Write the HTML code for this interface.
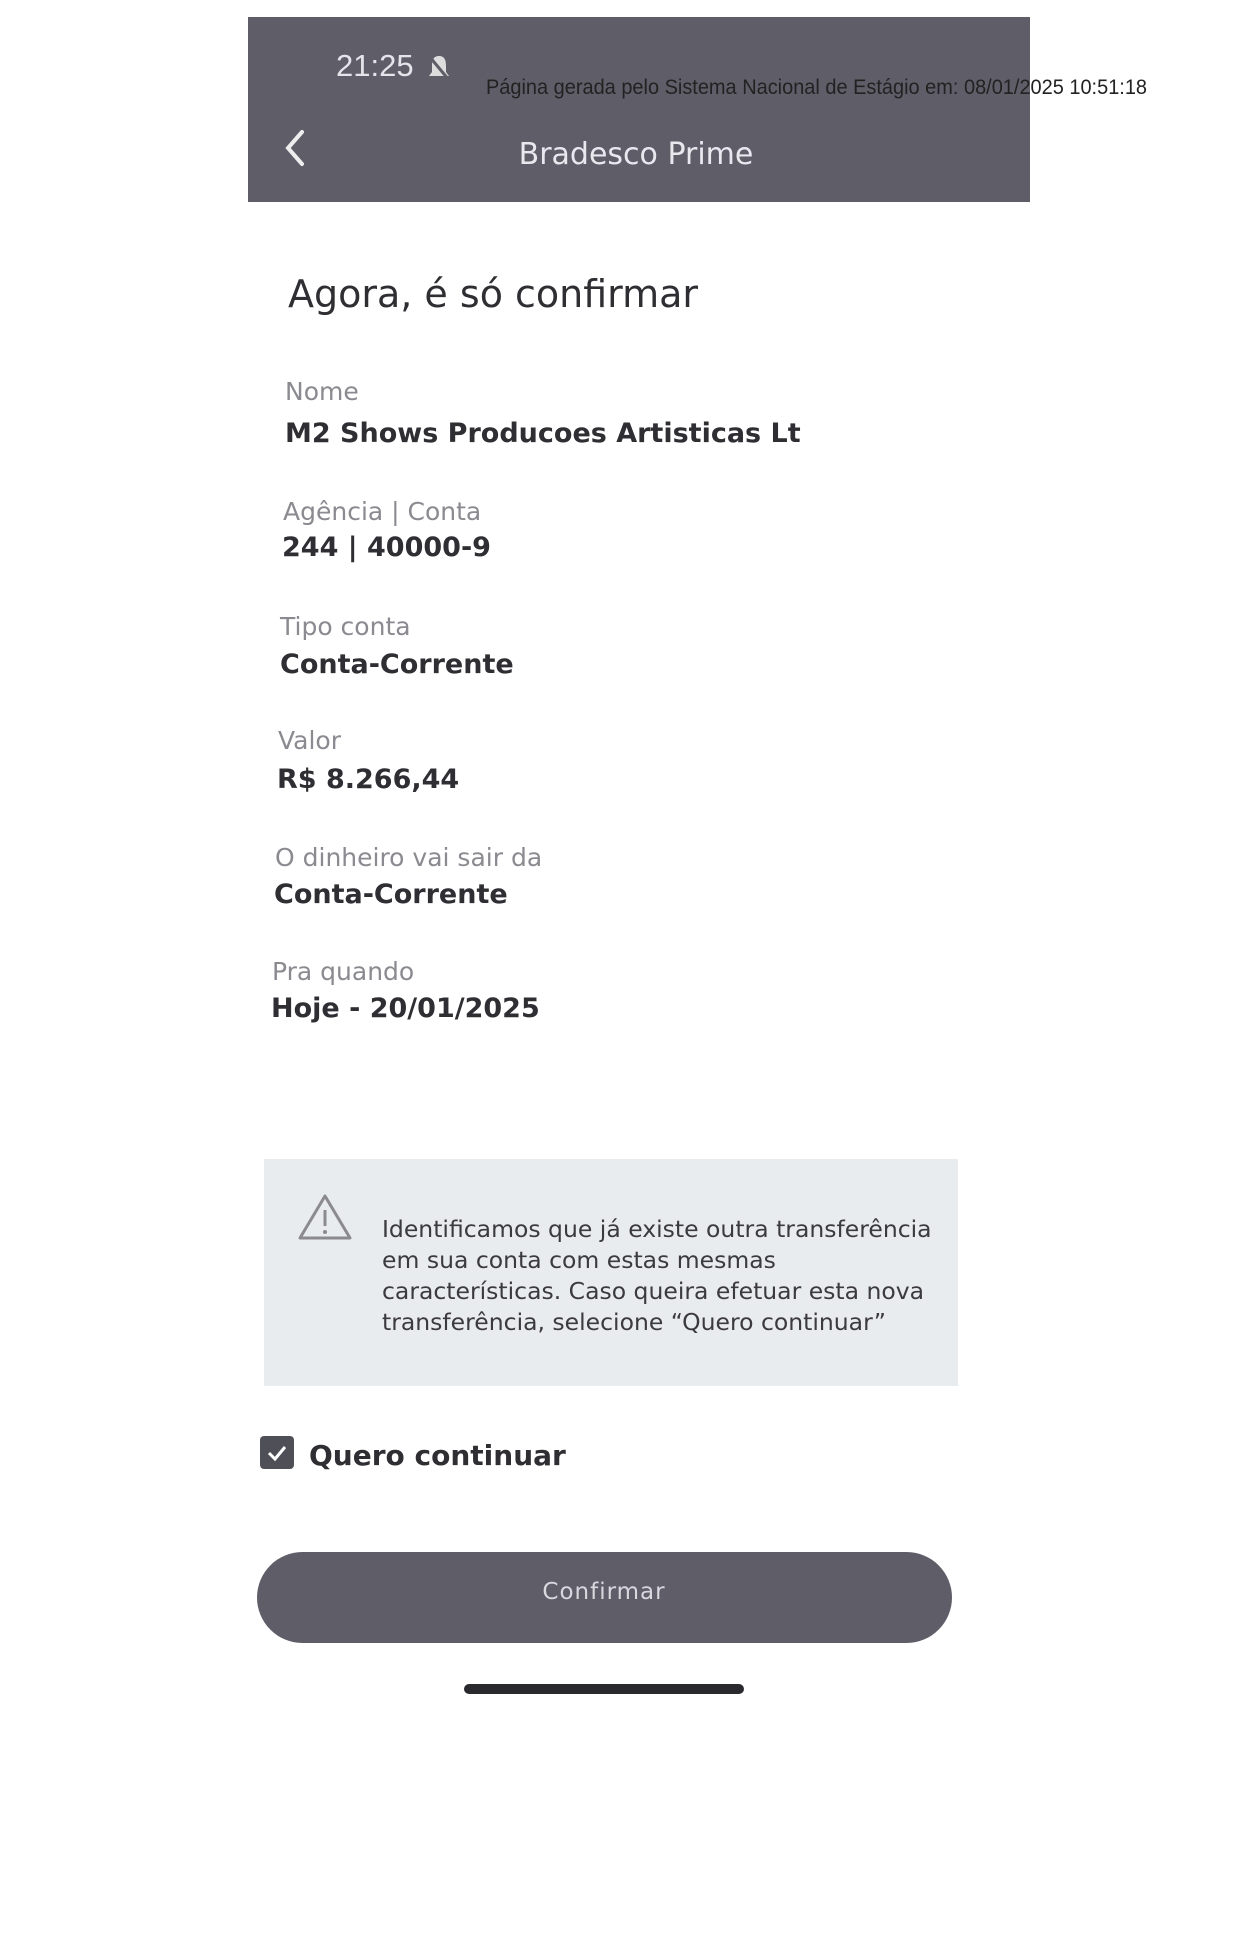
<!DOCTYPE html>
<html><head><meta charset="utf-8"><style>
body{margin:0;width:1240px;height:1948px;background:#fff;position:relative;overflow:hidden;font-family:"DejaVu Sans","Liberation Sans",sans-serif;}
.a{position:absolute;white-space:nowrap;}
.hdr{position:absolute;left:248px;top:17px;width:782px;height:185px;background:#5f5d68;}
.lbl{position:absolute;font-size:25px;color:#8a8a90;white-space:nowrap;}
.val{position:absolute;font-size:27px;font-weight:bold;color:#2e2e33;white-space:nowrap;}
</style></head><body>
<div class="hdr"></div>
<div class="a" style="left:336px;top:48px;font-size:31px;color:#e4e4ea;font-family:'Liberation Sans',sans-serif;">21:25</div>
<svg class="a" style="left:426px;top:52px" width="26" height="30"><path d="M13 4 C7 4 6 9 6 14 L6 20 L3 24 L23 24 L20 20 L20 14 C20 9 19 4 13 4 Z" fill="#ddd"/><path d="M3 4 L23 28" stroke="#5f5d68" stroke-width="3"/></svg>
<div class="a" style="left:486px;top:76px;font-size:21px;color:#222;font-family:'Liberation Sans',sans-serif;transform:scaleX(0.95);transform-origin:left;">Página gerada pelo Sistema Nacional de Estágio em: 08/01/2025 10:51:18</div>
<svg class="a" style="left:280px;top:128px" width="30" height="40"><path d="M22 4 L8 20 L22 36" stroke="#eee" stroke-width="4" fill="none" stroke-linecap="round"/></svg>
<div class="a" style="left:636px;top:137px;transform:translateX(-50%);font-size:30px;color:#e8e8ee;">Bradesco Prime</div>
<div class="a" style="left:288px;top:272px;font-size:38px;color:#2e2e33;">Agora, é só confirmar</div>
<div class="lbl" style="left:285px;top:377px">Nome</div><div class="val" style="left:285px;top:418px">M2 Shows Producoes Artisticas Lt</div>
<div class="lbl" style="left:283px;top:497px">Agência | Conta</div><div class="val" style="left:282px;top:532px">244 | 40000-9</div>
<div class="lbl" style="left:280px;top:612px">Tipo conta</div><div class="val" style="left:280px;top:649px">Conta-Corrente</div>
<div class="lbl" style="left:278px;top:726px">Valor</div><div class="val" style="left:277px;top:764px">R$ 8.266,44</div>
<div class="lbl" style="left:275px;top:843px">O dinheiro vai sair da</div><div class="val" style="left:274px;top:879px">Conta-Corrente</div>
<div class="lbl" style="left:272px;top:957px">Pra quando</div><div class="val" style="left:271px;top:993px">Hoje - 20/01/2025</div>
<div class="a" style="left:264px;top:1159px;width:694px;height:227px;background:#e9ecee;"></div>
<svg class="a" style="left:296px;top:1192px" width="58" height="50"><path d="M29 4 L54 46 L4 46 Z" stroke="#8a8a90" stroke-width="3" fill="none" stroke-linejoin="round"/><path d="M29 18 V34" stroke="#8a8a90" stroke-width="3"/><circle cx="29" cy="40" r="2" fill="#8a8a90"/></svg>
<div class="a" style="left:382px;top:1214px;font-size:23.5px;line-height:31px;color:#3a3a40;">Identificamos que já existe outra transferência<br>em sua conta com estas mesmas<br>características. Caso queira efetuar esta nova<br>transferência, selecione “Quero continuar”</div>
<div class="a" style="left:260px;top:1436px;width:34px;height:33px;background:#4f4f57;border-radius:4px;"></div>
<svg class="a" style="left:260px;top:1436px" width="34" height="33"><path d="M9 17 L15 23 L25 11" stroke="#fff" stroke-width="3" fill="none"/></svg>
<div class="a" style="left:309px;top:1439px;font-size:28px;font-weight:bold;color:#2e2e33;">Quero continuar</div>
<div class="a" style="left:257px;top:1552px;width:695px;height:91px;background:#5f5d68;border-radius:46px;"></div>
<div class="a" style="left:604px;top:1579px;transform:translateX(-50%);font-size:23px;color:#d8d8de;letter-spacing:1px;">Confirmar</div>
<div class="a" style="left:464px;top:1684px;width:280px;height:10px;background:#2a2a2e;border-radius:5px;"></div>
</body></html>
